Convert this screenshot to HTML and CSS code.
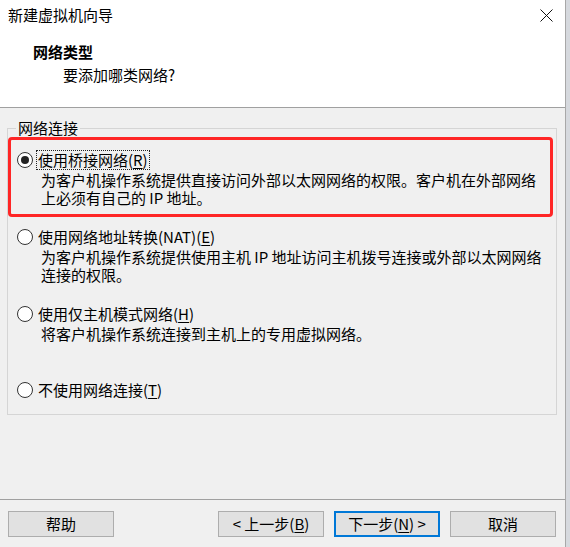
FILE: index.html
```html
<!DOCTYPE html>
<html lang="zh-CN">
<head>
<meta charset="utf-8">
<title>新建虚拟机向导</title>
<link rel="stylesheet" href="styles.css">
</head>
<body>
<div class="window">
  <div class="titlebar">
    <span class="title">新建虚拟机向导</span>
    <svg class="close" width="13" height="13" viewBox="0 0 13 13"><path d="M0.5 0.5 L12.5 12.5 M12.5 0.5 L0.5 12.5" stroke="#111" stroke-width="1" fill="none"/></svg>
  </div>
  <div class="header">
    <div class="h-title">网络类型</div>
    <div class="h-sub">要添加哪类网络?</div>
  </div>
  <div class="content">
    <fieldset class="group">
      <legend class="legend">网络连接</legend>
      <div class="option option-first highlight">
        <div class="opt-row"><span class="radio checked"></span><span class="label focus">使用桥接网络(<u>R</u>)</span></div>
        <div class="desc">为客户机操作系统提供直接访问外部以太网网络的权限。客户机在外部网络<br>上必须有自己的 IP 地址。</div>
      </div>
      <div class="option option-nat">
        <div class="opt-row"><span class="radio"></span><span class="label">使用网络地址转换(NAT)(<u>E</u>)</span></div>
        <div class="desc">为客户机操作系统提供使用主机 IP 地址访问主机拨号连接或外部以太网网络<br>连接的权限。</div>
      </div>
      <div class="option option-host">
        <div class="opt-row"><span class="radio"></span><span class="label">使用仅主机模式网络(<u>H</u>)</span></div>
        <div class="desc">将客户机操作系统连接到主机上的专用虚拟网络。</div>
      </div>
      <div class="option option-none">
        <div class="opt-row"><span class="radio"></span><span class="label">不使用网络连接(<u>T</u>)</span></div>
      </div>
    </fieldset>
  </div>
  <div class="footer">
    <button class="btn">帮助</button>
    <div class="btn-group">
      <button class="btn">&lt; 上一步(<u>B</u>)</button>
      <button class="btn primary">下一步(<u>N</u>) &gt;</button>
      <button class="btn">取消</button>
    </div>
  </div>
</div>
</body>
</html>
```
FILE: styles.css
```css
* { box-sizing: border-box; }
html, body { margin: 0; padding: 0; }
body {
  background: #d6d9de;
  font-family: "Noto Sans CJK SC", "Noto Sans", sans-serif;
  font-size: 15px;
  color: #000;
  width: 570px;
  height: 547px;
  overflow: hidden;
}
.window {
  width: 566px;
  height: 547px;
  background: #f0f0f0;
  border-right: 1px solid #a8a8a8;
  display: flex;
  flex-direction: column;
}
.titlebar {
  height: 32px;
  background: #fff;
  display: flex;
  align-items: center;
  justify-content: space-between;
  padding: 0 12px 0 8px;
  line-height: 20px;
}
.title { margin-top: -2px; }
.close { display: block; margin-top: -1px; }
.header {
  height: 76px;
  background: #fff;
  border-bottom: 1px solid #a0a0a0;
  padding: 10px 0 0 33px;
  line-height: 20px;
}
.h-title { font-weight: bold; }
.h-sub { margin-top: 3px; padding-left: 30px; }
.content {
  padding: 11px 8px 0 7px;
}
.group {
  margin: 0;
  padding: 0 0 14px 0;
  border: 1px solid #d5d5d5;
  width: 550px;
}
.legend {
  margin-left: 8px;
  padding: 0 2px;
  line-height: 18px;
}
.option { padding-left: 9px; }
.opt-row {
  display: flex;
  align-items: center;
  height: 20px;
}
.label {
  line-height: 18px;
  padding: 0 1px;
  margin-left: 3px;
  border: 1px dotted transparent;
}
.label.focus { border-color: #222; }
.radio {
  width: 16px;
  height: 16px;
  border: 1px solid #333;
  border-radius: 50%;
  background: #fff;
  display: flex;
  align-items: center;
  justify-content: center;
  flex: none;
}
.radio.checked::after {
  content: "";
  width: 8px;
  height: 8px;
  border-radius: 50%;
  background: #222;
}
.desc {
  padding-left: 24px;
  line-height: 18px;
  margin-top: 1px;
}
.highlight {
  border: 3px solid #ff2626;
  border-radius: 4px;
  width: 545px;
  padding: 10px 0 7px 6px;
}
.option-nat { margin-top: 10px; }
.option-host { margin-top: 20px; }
.option-none { margin-top: 37px; }
.footer {
  margin-top: auto;
  height: 48px;
  border-top: 1px solid #a0a0a0;
  padding: 11px 9px 0 8px;
  display: flex;
  justify-content: space-between;
  align-items: flex-start;
}
.btn-group { display: flex; gap: 10px; }
.btn {
  width: 106px;
  height: 26px;
  background: #e1e1e1;
  border: 1px solid #adadad;
  font-family: inherit;
  font-size: 15px;
  color: #000;
  padding: 0;
  line-height: 22px;
  margin: 0;
}
.btn.primary { border: 2px solid #0078d7; }
u { text-underline-offset: 2px; }
```
